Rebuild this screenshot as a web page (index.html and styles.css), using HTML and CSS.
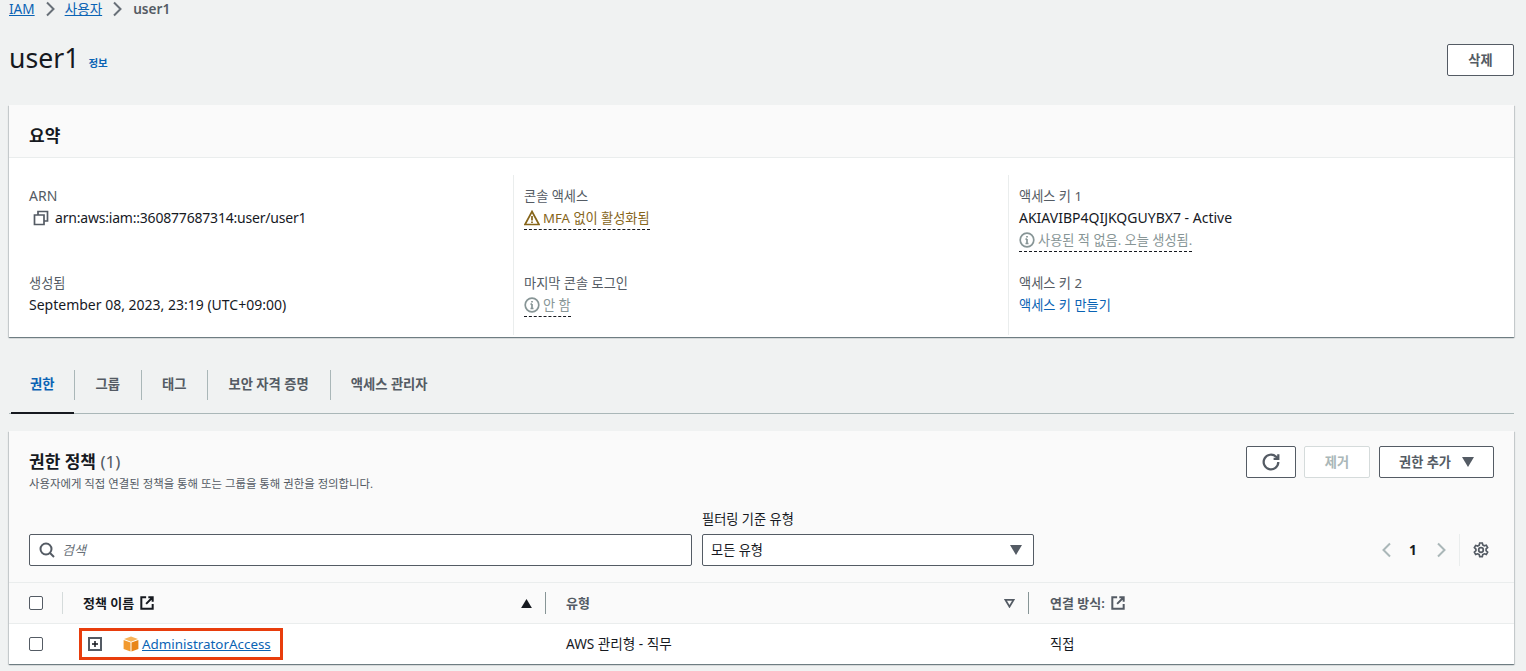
FILE: index.html
```html
<!DOCTYPE html>
<html lang="ko">
<head>
<meta charset="utf-8">
<title>user1 | IAM</title>
<link rel="stylesheet" href="styles.css">
</head>
<body>
<nav class="crumbs">
  <a href="#">IAM</a>
  <svg class="crumb-sep" width="16" height="16" viewBox="0 0 16 16"><path d="M5 1.500l6.500 6.500L5 14.500"/></svg>
  <a href="#">사용자</a>
  <svg class="crumb-sep" width="16" height="16" viewBox="0 0 16 16"><path d="M5 1.500l6.500 6.500L5 14.500"/></svg>
  <span class="crumb-current">user1</span>
</nav>

<header class="page-head">
  <div class="title-wrap"><h1>user1</h1><a class="info" href="#">정보</a></div>
  <button class="btn btn-delete">삭제</button>
</header>

<section class="card summary">
  <h2 class="card-head">요약</h2>
  <div class="summary-grid">
    <div class="col">
      <div class="item">
        <div class="label latin">ARN</div>
        <div class="value arn">
          <svg width="16" height="16" viewBox="0 0 16 16" class="copy"><path d="M5 5V1.500h9.500V11H11M1.500 5H11v9.500H1.500z"/></svg>
          <span>arn:aws:iam::360877687314:user/user1</span>
        </div>
      </div>
      <div class="item">
        <div class="label">생성됨</div>
        <div class="value latin">September 08, 2023, 23:19 (UTC+09:00)</div>
      </div>
    </div>
    <div class="col">
      <div class="item">
        <div class="label">콘솔 액세스</div>
        <div class="value"><span class="dash warn">
          <svg width="16" height="16" viewBox="0 0 16 16" class="warn-icon"><path d="M8 1.500L15 14.500H1z"/><path d="M8 6v4.500M8 11.500v1.500"/></svg>MFA 없이 활성화됨</span></div>
      </div>
      <div class="item">
        <div class="label">마지막 콘솔 로그인</div>
        <div class="value"><span class="dash muted">
          <svg width="16" height="16" viewBox="0 0 16 16" class="info-icon"><circle cx="8" cy="8" r="6.800"/><path d="M8 7v4.500M6.500 7.200H8M6.500 11.500h3M8 4v1.500"/></svg>안 함</span></div>
      </div>
    </div>
    <div class="col">
      <div class="item">
        <div class="label">액세스 키 1</div>
        <div class="value latin">AKIAVIBP4QIJKQGUYBX7 - Active</div>
        <div class="value"><span class="dash muted">
          <svg width="16" height="16" viewBox="0 0 16 16" class="info-icon"><circle cx="8" cy="8" r="6.800"/><path d="M8 7v4.500M6.500 7.200H8M6.500 11.500h3M8 4v1.500"/></svg>사용된 적 없음. 오늘 생성됨.</span></div>
      </div>
      <div class="item">
        <div class="label">액세스 키 2</div>
        <div class="value"><a class="plain-link" href="#">액세스 키 만들기</a></div>
      </div>
    </div>
  </div>
</section>

<nav class="tabs">
  <a class="tab active" href="#">권한</a>
  <a class="tab" href="#">그룹</a>
  <a class="tab" href="#">태그</a>
  <a class="tab" href="#">보안 자격 증명</a>
  <a class="tab" href="#">액세스 관리자</a>
</nav>

<section class="card policies">
  <div class="policies-head">
    <div class="head-top">
      <div>
        <h2 class="pol-title">권한 정책 <span class="count">(1)</span></h2>
        <p class="pol-desc">사용자에게 직접 연결된 정책을 통해 또는 그룹을 통해 권한을 정의합니다.</p>
      </div>
      <div class="actions">
        <button class="btn btn-icon"><svg width="18" height="18" viewBox="0 0 16 16" class="refresh"><path d="M14.500 8a6.500 6.500 0 1 1-2-4.700L14.500 5"/><path d="M14.500 1v4.200h-4.200"/></svg></button>
        <button class="btn btn-disabled">제거</button>
        <button class="btn btn-add">권한 추가<svg width="12" height="10" viewBox="0 0 12 10" class="tri"><path d="M0 0h12L6 10z"/></svg></button>
      </div>
    </div>
    <div class="filters">
      <div class="search">
        <svg width="16" height="16" viewBox="0 0 16 16" class="search-icon"><circle cx="7" cy="7" r="5.500"/><path d="M11 11l4 4"/></svg>
        <span class="placeholder">검색</span>
      </div>
      <div class="filter-field">
        <label class="filter-label">필터링 기준 유형</label>
        <div class="select"><span>모든 유형</span><svg width="12" height="10" viewBox="0 0 12 10" class="tri"><path d="M0 0h12L6 10z"/></svg></div>
      </div>
      <div class="pager">
        <svg width="16" height="16" viewBox="0 0 16 16" class="chev"><path d="M11 1.500L4.500 8l6.500 6.500"/></svg>
        <span class="page-num">1</span>
        <svg width="16" height="16" viewBox="0 0 16 16" class="chev"><path d="M5 1.500L11.500 8 5 14.500"/></svg>
        <span class="pager-sep"></span>
        <svg width="16" height="16" viewBox="0 0 16 16" class="gear"><circle cx="8" cy="8" r="2.300"/><path d="M6.700 1h2.600l.5 2 1.500.8 2-.6 1.300 2.300-1.500 1.400v1.800l1.500 1.400-1.300 2.300-2-.6-1.500.8-.5 2H6.700l-.5-2-1.500-.8-2 .6-1.300-2.300 1.500-1.400V7.100L1.400 5.700l1.300-2.300 2 .6 1.500-.8z"/></svg>
      </div>
    </div>
  </div>
  <div class="table">
    <div class="row head-row">
      <div class="cell cell-check"><span class="checkbox"></span></div>
      <div class="cell cell-name">
        <span class="th">정책 이름<svg width="14" height="14" viewBox="0 0 16 16" class="ext"><path d="M7 1.500H1.500v13h13V9M9.500 1.500h5v5M14.500 1.500L7 9"/></svg></span>
        <svg width="11" height="9" viewBox="0 0 12 10" class="sort-up"><path d="M0 10h12L6 0z"/></svg>
      </div>
      <div class="cell cell-type">
        <span class="th">유형</span>
        <svg width="11" height="9" viewBox="0 0 12 10" class="sort-down"><path d="M1.500 1h9L6 8.500z"/></svg>
      </div>
      <div class="cell cell-via">
        <span class="th">연결 방식:<svg width="14" height="14" viewBox="0 0 16 16" class="ext"><path d="M7 1.500H1.500v13h13V9M9.500 1.500h5v5M14.500 1.500L7 9"/></svg></span>
      </div>
    </div>
    <div class="row body-row">
      <div class="cell cell-check"><span class="checkbox"></span></div>
      <div class="cell cell-name">
        <div class="highlight">
          <svg width="14" height="14" viewBox="0 0 14 14" class="expand"><rect x="1" y="1" width="12" height="12"/><path d="M7 4v6M4 7h6"/></svg>
          <svg width="16" height="16" viewBox="0 0 16 16" class="box"><path class="box-top" d="M8 .5l7 2.600L8 5.700 1 3.100z"/><path class="box-l" d="M.6 4l6.900 2.600v8.900L.6 12.900z"/><path class="box-r" d="M15.400 4L8.500 6.600v8.900l6.900-2.600z"/></svg>
          <a class="policy-link" href="#">AdministratorAccess</a>
        </div>
      </div>
      <div class="cell cell-type type-value">AWS 관리형 - 직무</div>
      <div class="cell cell-via">직접</div>
    </div>
  </div>
</section>
</body>
</html>
```

FILE: styles.css
```css
* { box-sizing: border-box; }
html, body { height: 100%; }
body {
  margin: 0;
  padding: 0 12px 0 9px;
  background: #f0f2f2;
  color: #16191f;
  font-family: "Noto Sans", "Noto Sans CJK KR", sans-serif;
  font-size: 13.2px;
  line-height: 20px;
  overflow: hidden;
}
a { color: #0a63b4; }
.latin { font-size: 14px; }
.crumbs { display: flex; align-items: center; height: 18px; font-size: 13.6px; gap: 7px; }
.crumb-sep { fill: none; stroke: #687078; stroke-width: 2; }
.crumb-current { color: #545b64; font-weight: 600; margin-left: 1px; }
.page-head { display: flex; justify-content: space-between; align-items: flex-start; height: 87px; padding-top: 26px; }
.title-wrap { display: flex; align-items: center; gap: 9px; height: 28px; }
.title-wrap h1 { margin: 0; font-size: 26.6px; font-weight: 400; line-height: 28px; }
.info { font-size: 10.5px; font-weight: 600; text-decoration: none; padding-top: 10px; }
.btn {
  display: inline-flex; align-items: center; justify-content: center;
  height: 32px; padding: 0; background: #fff;
  border: 1px solid #545b64; border-radius: 2px;
  color: #545b64; font: 600 13.2px/20px "Noto Sans", "Noto Sans CJK KR", sans-serif;
}
.btn-delete { width: 67px; }
.card { background: #fff; box-shadow: 0 1px 1px 0 rgba(0,28,36,.4), 1px 1px 1px 0 rgba(0,28,36,.12), -1px 1px 1px 0 rgba(0,28,36,.12); }
.summary { height: 232px; }
.card-head {
  margin: 0; height: 53px; padding: 20px 20px 0; background: #fafafa;
  border-bottom: 1px solid #eaeded; font-size: 17px; font-weight: 700; line-height: 22px;
}
.summary-grid { display: grid; grid-template-columns: 504px 495px 1fr; padding: 17px 0 10px; height: 179px; }
.col { display: flex; flex-direction: column; gap: 24px; padding: 10px 0 0 10px; border-left: 1px solid #eaeded; }
.col:first-child { padding-left: 20px; border-left: 0; }
.item { height: 63px; }
.label { color: #545b64; line-height: 22px; }
.value { line-height: 22px; }
.arn { display: flex; align-items: center; gap: 6px; padding-left: 4px; font-size: 14px; letter-spacing: -.2px; }
.copy { fill: none; stroke: #545b64; stroke-width: 1.700; flex: none; }
.dash { display: inline-flex; align-items: center; gap: 3px; border-bottom: 1px dashed #16191f; height: 23px; }
.warn { color: #86651a; }
.muted { color: #879596; }
.warn-icon { fill: none; stroke: #86651a; stroke-width: 1.700; }
.info-icon { fill: none; stroke: #879596; stroke-width: 1.700; }
.plain-link { text-decoration: none; }

.tabs { display: flex; height: 44px; margin: 33px 0 17px; padding-left: 2px; border-bottom: 1px solid #aab7b8; }
.tab {
  position: relative; height: 44px; padding: 4px 21px 0; color: #545b64; font-weight: 600;
  font-size: 13.3px; text-decoration: none; white-space: nowrap;
}
.tab + .tab::before {
  content: ""; position: absolute; left: 0; top: 0; height: 30px; width: 1px; background: #aab7b8;
}
.tab.active { color: #0a63b4; border-bottom: 2px solid #16191f; padding: 4px 20px 0 19px; }

.policies { height: 233px; }
.policies-head { height: 152px; padding: 15px 20px 0; background: #fafafa; border-bottom: 1px solid #eaeded; }
.head-top { display: flex; justify-content: space-between; height: 56px; }
.pol-title { margin: 5px 0 0; font-size: 17px; font-weight: 700; line-height: 22px; }
.count { color: #545b64; font-weight: 400; }
.pol-desc { margin: 2px 0 0; font-size: 11.4px; line-height: 18px; color: #545b64; }
.actions { display: flex; gap: 8px; padding-right: 0; }
.btn-icon { width: 50px; }
.refresh { fill: none; stroke: #545b64; stroke-width: 2; }
.btn-disabled { width: 66px; color: #aab7b8; border-color: #d5dbdb; }
.btn-add { width: 115px; gap: 11px; margin-left: 1px; }
.tri { fill: #545b64; }
.filters { display: flex; align-items: flex-end; height: 64px; }
.search {
  display: flex; align-items: center; gap: 7px; width: 663px; height: 32px; padding-left: 9px;
  background: #fff; border: 1px solid #545b64; border-radius: 2px;
}
.search-icon { fill: none; stroke: #545b64; stroke-width: 2; }
.placeholder { color: #687078; font-style: italic; font-size: 13px; }
.filter-field { margin-left: 10px; width: 332px; }
.filter-label { display: block; color: #16191f; height: 25px; line-height: 20px; }
.select {
  display: flex; align-items: center; justify-content: space-between; height: 32px; padding: 0 11px 0 8px;
  background: #fff; border: 1px solid #545b64; border-radius: 2px;
}
.pager { display: flex; align-items: center; height: 32px; margin-left: auto; padding-right: 5px; }
.chev { fill: none; stroke: #aab7b8; stroke-width: 2; }
.page-num { width: 36px; text-align: center; font-weight: 700; margin-right: 2px; font-size: 13.6px; }
.pager-sep { width: 1px; height: 32px; background: #eaeded; margin: 0 13px 0 10px; }
.gear { fill: none; stroke: #545b64; stroke-width: 1.700; }

.row { display: grid; grid-template-columns: 54px 483px 483px 1fr; }
.head-row { height: 41px; background: #fafafa; border-bottom: 1px solid #eaeded; }
.body-row { height: 40px; }
.cell { position: relative; display: flex; align-items: center; padding-left: 20px; }
.cell-via { padding-left: 21px; }
.head-row .cell-check::after, .head-row .cell-name::after, .head-row .cell-type::after {
  content: ""; position: absolute; right: 0; top: 9px; height: 22px; width: 1px; background: #d5dbdb;
}
.head-row .cell-name::after, .head-row .cell-type::after { background: #879596; }
.checkbox { display: block; width: 14px; height: 14px; background: #fff; border: 1px solid #545b64; border-radius: 2px; }
.cell-name { justify-content: space-between; padding-right: 14px; }
.th { display: inline-flex; align-items: center; gap: 6px; font-weight: 600; font-size: 13px; color: #16191f; }
.cell-type .th, .cell-via .th { color: #545b64; }
.cell-type { justify-content: space-between; padding-right: 14px; }
.type-value { font-size: 13.6px; }
.ext { fill: none; stroke: #16191f; stroke-width: 2.300; }
.cell-via .ext { stroke: #545b64; }
.sort-up { fill: #16191f; }
.sort-down { fill: none; stroke: #545b64; stroke-width: 2; }
.body-row .cell-name { padding-left: 16px; }
.highlight {
  display: flex; align-items: center; width: 204px; height: 32px; padding-left: 6px;
  border: 3px solid #e83d0c;
}
.expand { fill: none; stroke: #545b64; stroke-width: 2; }
.expand path { stroke: #16191f; stroke-width: 1.500; }
.box { margin-left: 21px; margin-right: 3px; }
.box-top { fill: #f7b45a; }
.box-l { fill: #f2992e; }
.box-r { fill: #e8861a; }
.policy-link { white-space: nowrap; font-size: 13.4px; }
```
